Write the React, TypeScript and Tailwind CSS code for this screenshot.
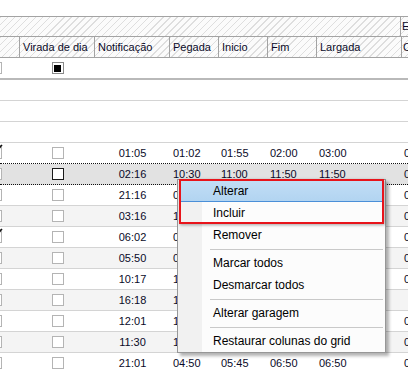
import React from 'react';

type Row = {
  n: string;
  p: string;
  i: string;
  f: string;
  l: string;
  e: string;
  tick?: boolean;
  sel?: boolean;
};

const rows: Row[] = [
  { n: '01:05', p: '01:02', i: '01:55', f: '02:00', l: '03:00', e: '0', tick: true },
  { n: '02:16', p: '10:30', i: '11:00', f: '11:50', l: '11:50', e: '0', sel: true },
  { n: '21:16', p: '01:10', i: '01:40', f: '02:30', l: '02:30', e: '0' },
  { n: '03:16', p: '14:20', i: '14:50', f: '15:40', l: '15:40', e: '0' },
  { n: '06:02', p: '05:10', i: '05:40', f: '06:30', l: '06:30', e: '0', tick: true },
  { n: '05:50', p: '05:00', i: '05:30', f: '06:20', l: '06:20', e: '0' },
  { n: '10:17', p: '16:10', i: '16:40', f: '17:30', l: '17:30', e: '0' },
  { n: '16:18', p: '13:00', i: '13:30', f: '14:20', l: '14:20', e: '' },
  { n: '12:01', p: '18:00', i: '18:30', f: '19:20', l: '19:20', e: '0' },
  { n: '11:30', p: '12:40', i: '13:10', f: '14:00', l: '14:00', e: '0' },
  { n: '21:01', p: '04:50', i: '05:45', f: '06:50', l: '06:50', e: '0' },
];

const hatch =
  'bg-[image:repeating-linear-gradient(135deg,#dedede_0px,#dedede_1px,#fbfbfb_1px,#fbfbfb_5px)]';

const Box = ({ dark, filled }: { dark?: boolean; filled?: boolean }) => (
  <div
    className={`flex h-[12px] w-[12px] items-center justify-center border bg-white ${
      dark ? 'border-[#1a1a1a]' : filled ? 'border-[#8a8a8a]' : 'border-[#b4b4b4]'
    }`}
  >
    {filled && <div className="h-[7px] w-[7px] bg-black" />}
  </div>
);

const LeftBox = ({ tick }: { tick?: boolean }) => (
  <div className="flex h-full w-[20px] shrink-0 items-center overflow-hidden">
    <div className="relative -ml-[10px] h-[12px] w-[12px] shrink-0 border border-[#b4b4b4] bg-white">
      {tick && (
        <svg className="absolute -right-[2px] -top-[3px] overflow-visible" width="6" height="6" viewBox="0 0 6 6">
          <path d="M0 5 L5 0" stroke="#111" strokeWidth="1.6" />
        </svg>
      )}
    </div>
  </div>
);

const Head = ({ w, children }: { w: string; children?: React.ReactNode }) => (
  <div className={`${w} flex h-full shrink-0 items-center border-r border-[#a3a3a3] pl-[3px]`}>{children}</div>
);

const MenuItem = ({ label, active }: { label: string; active?: boolean }) => (
  <div
    className={`mx-[2px] flex h-[22px] items-center pl-[33px] ${
      active ? 'border-b border-[#4a8fd8] bg-[linear-gradient(#c2def6,#b2d4f1)]' : ''
    }`}
  >
    {label}
  </div>
);

const Sep = () => (
  <div className="flex h-[6px] items-center pl-[32px] pr-[2px]">
    <div className="h-[1px] w-full bg-[#c9c9c9]" />
  </div>
);

export default function App() {
  return (
    <div className="relative h-[371px] w-[408px] overflow-hidden bg-white font-['Liberation_Sans',Arial,sans-serif] text-[11px] text-[#0a0a28]">
      <div className="h-[16px]" />

      {/* group band */}
      <div className={`flex h-[21px] border-y border-[#a3a3a3] ${hatch}`}>
        <div className="w-[401px] shrink-0 border-r border-[#a3a3a3]" />
        <div className="flex min-w-0 items-center pl-[1px]">E</div>
      </div>

      {/* column headers */}
      <div className={`flex h-[21px] border-b border-[#a3a3a3] ${hatch}`}>
        <Head w="w-[20px]" />
        <Head w="w-[75px]">Virada de dia</Head>
        <Head w="w-[75px]">Notificação</Head>
        <Head w="w-[49px]">Pegada</Head>
        <Head w="w-[49px]">Inicio</Head>
        <Head w="w-[49px]">Fim</Head>
        <Head w="w-[85px]">Largada</Head>
        <div className="flex min-w-0 items-center pl-[1px]">C</div>
      </div>

      {/* filter row */}
      <div className="flex h-[22px] border-b-2 border-[#b9b9b9]">
        <LeftBox />
        <div className="flex w-[75px] shrink-0 items-center justify-center">
          <Box filled />
        </div>
      </div>

      {[0, 1, 2].map((k) => (
        <div key={k} className="h-[21px] border-b border-[#d4d4d4]" />
      ))}

      {rows.map((r, idx) => {
        const bg = r.sel ? 'bg-[#e2e2e2]' : idx % 2 === 1 ? 'bg-[#f4f4f4]' : 'bg-white';
        const line = idx <= 1 ? 'border-dotted border-[#111]' : 'border-[#d4d4d4]';
        return (
          <div key={idx} className={`flex h-[21px] items-center border-b ${line} ${bg}`}>
            <LeftBox tick={r.tick} />
            <div className="flex w-[75px] shrink-0 justify-center">
              <Box dark={r.sel} />
            </div>
            <div className="w-[75px] shrink-0 text-center">{r.n}</div>
            <div className="w-[49px] shrink-0 pl-[3px]">{r.p}</div>
            <div className="w-[49px] shrink-0 pl-[2px]">{r.i}</div>
            <div className="w-[49px] shrink-0 pl-[2px]">{r.f}</div>
            <div className="w-[85px] shrink-0 pl-[2px]">{r.l}</div>
            <div className="min-w-0 pl-[2px]">{r.e}</div>
          </div>
        );
      })}

      {/* context menu */}
      <div className="absolute left-[177px] top-[179px] w-[209px] border border-[#979797] bg-[linear-gradient(to_right,#f1f1f1_0px,#f1f1f1_24px,#fcfcfc_24px)] text-[12px] text-black shadow-[3px_3px_3px_rgba(0,0,0,0.3)]">
        <MenuItem label="Alterar" active />
        <MenuItem label="Incluir" />
        <MenuItem label="Remover" />
        <Sep />
        <MenuItem label="Marcar todos" />
        <MenuItem label="Desmarcar todos" />
        <Sep />
        <MenuItem label="Alterar garagem" />
        <Sep />
        <MenuItem label="Restaurar colunas do grid" />
      </div>

      {/* red highlight annotation */}
      <div className="absolute left-[179px] top-[179px] h-[45px] w-[205px] border-2 border-[#e8141b] shadow-[1px_1px_3px_rgba(0,0,0,0.35)]" />
    </div>
  );
}
